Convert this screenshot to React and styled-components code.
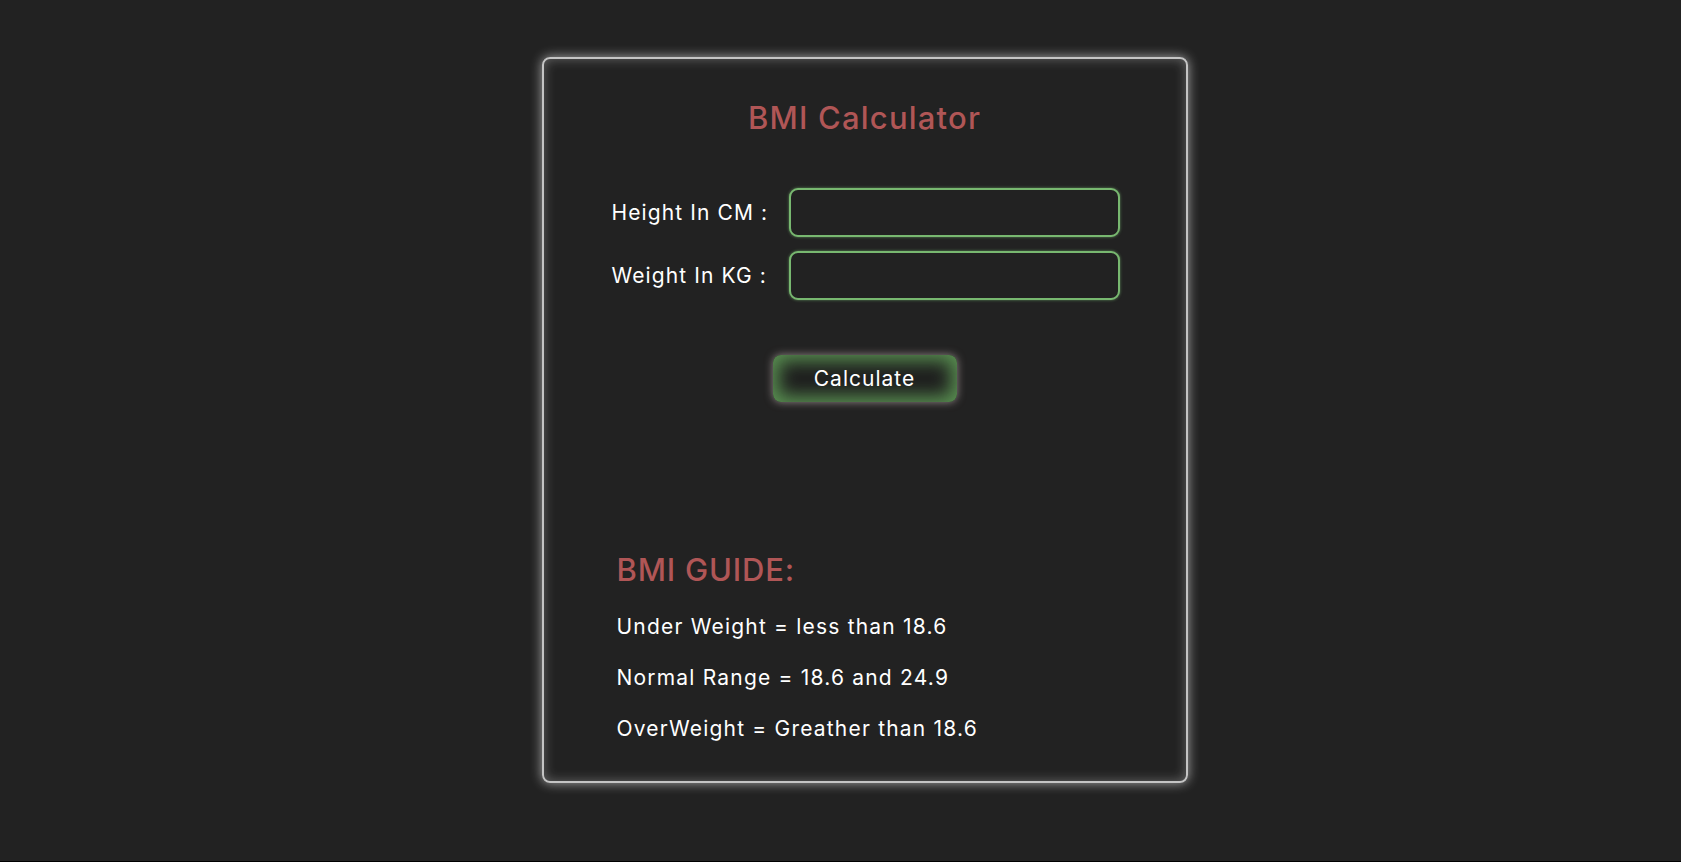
import React, { useState } from 'react';
import styled, { createGlobalStyle } from 'styled-components';

const GlobalStyle = createGlobalStyle`
  html {
    background: #000;
  }
  body {
    margin: 0;
    font-family: Inter, "Noto Sans", sans-serif;
  }
`

const Page = styled.div`
  min-height: calc(100vh - 1px);
  background: #222222;
  display: flex;
  justify-content: center;
  align-items: flex-start;
  padding: 57px 0 0 48px;
  box-sizing: border-box;
`

const Card = styled.div`
  width: 646px;
  box-sizing: border-box;
  border: 2px solid #c4c4c4;
  border-radius: 8px;
  box-shadow: 0 0 12px rgba(255, 255, 255, 0.6), inset 0 0 12px rgba(255, 255, 255, 0.3);
  padding: 36px 0 37px 0;
  display: flex;
  flex-direction: column;
`

const Title = styled.h1`
  margin: 0;
  font-size: 31px;
  line-height: 45px;
  font-weight: 500;
  color: #b05656;
  text-align: center;
  letter-spacing: 1.2px;
`

const Form = styled.div`
  margin-top: 48px;
  display: flex;
  flex-direction: column;
  gap: 14px;
  padding-left: 68px;
`

const Row = styled.div`
  display: flex;
  align-items: center;
`

const Label = styled.label`
  color: #ffffff;
  font-size: 21px;
  letter-spacing: 1.1px;
  width: 177px;
`

const Input = styled.input`
  width: 331px;
  height: 49px;
  box-sizing: border-box;
  background: #222222;
  border: 2px solid #78b870;
  border-radius: 9px;
  box-shadow: 0 0 3px rgba(120, 184, 112, 0.7);
  color: #fff;
  font-size: 18px;
  padding: 0 12px;
  outline: none;
`

const Button = styled.button`
  align-self: center;
  margin-top: 55px;
  width: 184px;
  height: 47px;
  background: #1e1e1e;
  border: none;
  border-radius: 8px;
  color: #ffffff;
  font-family: inherit;
  font-size: 21px;
  letter-spacing: 1px;
  cursor: pointer;
  box-shadow: inset 0 0 18px 6px #5a9152, 0 0 8px rgba(255, 235, 235, 0.5);
`

const Guide = styled.div`
  margin-top: 145px;
  padding-left: 73px;
  display: flex;
  flex-direction: column;
`

const GuideTitle = styled.h2`
  margin: 0 0 20px;
  font-size: 31px;
  line-height: 45px;
  font-weight: 500;
  color: #b05656;
  letter-spacing: 0.8px;
`

const GuideLine = styled.p`
  margin: 0;
  font-size: 21px;
  line-height: 30px;
  letter-spacing: 1.2px;
  color: #ffffff;
  & + & {
    margin-top: 21px;
  }
`

export default function App() {
  const [height, setHeight] = useState('');
  const [weight, setWeight] = useState('');

  return (
    <Page>
      <GlobalStyle />
      <Card>
        <Title>BMI Calculator</Title>
        <Form>
          <Row>
            <Label>Height In CM :</Label>
            <Input value={height} onChange={e => setHeight(e.target.value)} />
          </Row>
          <Row>
            <Label>Weight In KG :</Label>
            <Input value={weight} onChange={e => setWeight(e.target.value)} />
          </Row>
        </Form>
        <Button>Calculate</Button>
        <Guide>
          <GuideTitle>BMI GUIDE:</GuideTitle>
          <GuideLine>Under Weight = less than 18.6</GuideLine>
          <GuideLine>Normal Range = 18.6 and 24.9</GuideLine>
          <GuideLine>OverWeight = Greather than 18.6</GuideLine>
        </Guide>
      </Card>
    </Page>
  );
}
